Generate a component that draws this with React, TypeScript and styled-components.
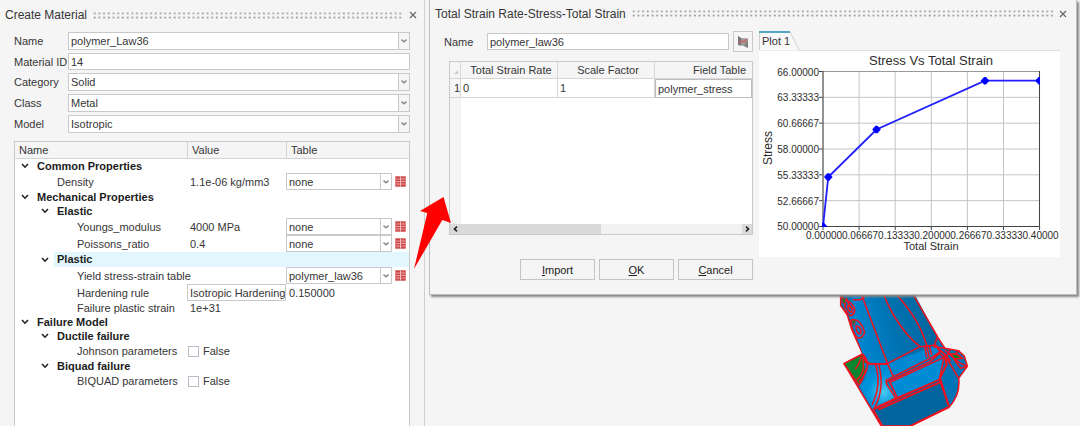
import React from "react";
import styled, { createGlobalStyle, css } from "styled-components";

const GlobalStyle = createGlobalStyle`
  *, *::before, *::after { box-sizing: border-box; }
  body {
    margin: 0;
    background: #f5f5f5;
    color: #363636;
    font: 11px/14px "Liberation Sans", Arial, sans-serif;
  }
  button, input, select { font: inherit; color: inherit; margin: 0; }
`;

const Page = styled.div`
  position: relative;
  display: flex;
  min-height: 100vh;
  overflow: hidden;
`;

const Sidebar = styled.aside`
  display: flex;
  flex-direction: column;
  flex: 0 0 425px;
  padding: 0 14px;
  border-right: 1px solid #cfcfcf;
`;

const TitleBar = styled.header<{ $height: number; $pull: number }>`
  display: flex;
  align-items: center;
  gap: 6px;
  height: ${(p) => p.$height}px;
  margin: 0 -7px 0 -${(p) => p.$pull}px;
`;

const Title = styled.h2`
  margin: 0;
  font-size: 12px;
  font-weight: 400;
  line-height: 16px;
  white-space: nowrap;
`;

const Grip = styled.svg`
  flex: 1;
  min-width: 0;
  width: 100%;
  height: 7px;
`;

const CloseButton = styled.button`
  display: flex;
  padding: 0;
  border: 0;
  background: none;
`;

const Form = styled.form`
  display: flex;
  flex-direction: column;
  gap: 3px;
  padding-top: 2px;
`;

const Field = styled.div`
  display: grid;
  grid-template-columns: 54px 1fr;
  align-items: center;
`;

const Label = styled.label`
  white-space: nowrap;
`;

const boxed = css`
  width: 100%;
  min-width: 0;
  padding: 0 2px;
  border: 1px solid #c9c9c9;
  border-radius: 0;
  background: #fff;
  line-height: 14px;
`;

const TextInput = styled.input`
  ${boxed}
  height: 17px;
`;

const Combo = styled.div<{ $height: number; $shaded?: boolean }>`
  display: grid;
  grid-template-columns: minmax(0, 1fr) 12px;
  height: ${(p) => p.$height}px;

  select {
    ${boxed}
    grid-area: 1 / 1 / 2 / 3;
    height: 100%;
    appearance: none;
  }

  > span {
    grid-area: 1 / 2;
    display: flex;
    align-items: center;
    justify-content: center;
    border: 1px solid #c9c9c9;
    background: ${(p) => (p.$shaded ? "#f5f5f5" : "#fff")};
    pointer-events: none;
  }
`;

const TreeBox = styled.div`
  flex: 1;
  margin-top: 8px;
  border: 1px solid #c9c9c9;
  border-bottom: 0;
  background: #fff;
`;

const Tree = styled.table`
  width: 100%;
  table-layout: fixed;
  border-spacing: 0;

  th {
    height: 17px;
    padding: 0 4px;
    border-bottom: 1px solid #d4d4d4;
    background: #f5f5f5;
    font-weight: 400;
    line-height: 14px;
    text-align: left;
  }
  th + th { border-left: 1px solid #d4d4d4; }
  td { padding: 0; white-space: nowrap; }
`;

const TreeRow = styled.tr<{ $height: number; $selected?: boolean }>`
  height: ${(p) => p.$height}px;
  td + td { background: ${(p) => (p.$selected ? "#e2f6fe" : "transparent")}; }
`;

const NameCell = styled.div<{ $indent: number; $group?: boolean; $selected?: boolean }>`
  display: flex;
  align-items: center;
  padding-left: ${(p) => p.$indent}px;

  > span {
    flex: 1;
    padding-left: 3px;
    background: ${(p) => (p.$selected ? "#e2f6fe" : "transparent")};
    color: ${(p) => (p.$group ? "#1c1c1c" : "inherit")};
    font-weight: ${(p) => (p.$group ? 700 : 400)};
    line-height: ${(p) => (p.$selected ? 15 : 14)}px;
  }
`;

const Expander = styled.button`
  display: flex;
  width: 8px;
  margin-right: 5px;
  padding: 0;
  border: 0;
  background: none;
`;

const Value = styled.span`
  padding-left: 3px;
`;

const ValueInput = styled.input`
  ${boxed}
  display: block;
  height: 17px;
  padding: 0 0 0 2px;
`;

const Check = styled.label`
  display: flex;
  align-items: center;
  gap: 4px;
  padding-left: 1px;

  input {
    appearance: none;
    width: 11px;
    height: 11px;
    border: 1px solid #b9bec9;
    background: #fff;
  }
`;

const TableCell = styled.div`
  display: grid;
  grid-template-columns: minmax(0, 1fr) 11px;
  align-items: center;
  gap: 3px;
  padding-right: 3px;
`;

const IconButton = styled.button`
  display: flex;
  padding: 0;
  border: 0;
  background: none;
`;

const Workspace = styled.main`
  position: relative;
  flex: 1;
  min-width: 0;
  padding: 0 3px 0 4px;
`;

const Model = styled.svg`
  position: absolute;
  left: 405px;
  top: 285px;
  width: 160px;
  height: 141px;
`;

const Dialog = styled.section`
  position: relative;
  padding: 0 16px 14px 14px;
  border: 1px solid #bdbdbd;
  border-top: 0;
  background: #f5f5f5;
  box-shadow: 2px 2px 2px #888;
`;

const DialogBody = styled.div`
  display: grid;
  grid-template-columns: minmax(0, 309fr) minmax(0, 301fr);
  gap: 6px;
  padding-top: 4px;
`;

const Column = styled.div`
  min-width: 0;
`;

const CurveName = styled.div`
  display: grid;
  grid-template-columns: 43px 1fr 20px;
  align-items: center;
  height: 21px;

  input { width: calc(100% - 4px); }
`;

const PickButton = styled.button`
  display: flex;
  align-items: center;
  justify-content: center;
  height: 21px;
  padding: 0;
  border: 1px solid #c9c9c9;
  background: #f5f5f5;
`;

const Sheet = styled.div`
  display: flex;
  flex-direction: column;
  height: 174px;
  margin: 9px 0 0 5px;
  border: 1px solid #c9c9c9;
  background: linear-gradient(90deg, #f5f5f5 11px, #fff 11px);
`;

const SheetTable = styled.table`
  width: 100%;
  table-layout: fixed;
  border-spacing: 0;

  th, td {
    padding: 0;
    border-right: 1px solid #d6d6d6;
    border-bottom: 1px solid #d6d6d6;
    white-space: nowrap;
  }
  th {
    height: 17px;
    background: #f5f5f5;
    font-weight: 400;
    text-align: center;
  }
  thead th + th { padding-left: 4px; }
  tbody th { text-align: right; }
  td {
    height: 19px;
    padding-left: 2px;
    background: #fff;
  }
  tr > :last-child { border-right: 0; }
  thead th:last-child { padding-right: 6px; text-align: right; }
  tbody td:last-child { border: 1px solid #bdbdbd; }
`;

const ScrollBar = styled.div`
  display: grid;
  grid-template-columns: 10px 141fr 141fr 10px;
  height: 10px;
  margin-top: auto;
  background: #f1f1f1;

  button {
    display: flex;
    align-items: center;
    justify-content: center;
    padding: 0;
    border: 0;
    background: #dadada;
  }
  button:last-child { grid-column: 4; }
  span { background: #dadada; }
`;

const Actions = styled.div`
  display: flex;
  justify-content: flex-end;
  gap: 4px;
  margin-top: 24px;
`;

const ActionButton = styled.button`
  width: 75px;
  height: 21px;
  padding: 0;
  border: 1px solid #c4c4c4;
  background: #f5f5f5;
  color: #222;
`;

const TabStrip = styled.div`
  height: 20px;
  border-bottom: 1px solid #dedede;
`;

const Tab = styled.button`
  display: grid;
  padding: 0;
  border: 0;
  background: none;
  text-align: left;

  > * { grid-area: 1 / 1; }
  > span { padding: 3px 0 0 3px; }
`;

const Chart = styled.svg`
  display: block;
  width: 100%;
  background: #fff;
  fill: #2c2c2c;
`;

const Pointer = styled.svg`
  position: absolute;
  left: 414px;
  top: 197px;
  width: 38px;
  height: 74px;
`;

function Dots({ id }: { id: string }) {
  return (
    <Grip aria-hidden="true">
      <pattern id={id} width="4.7" height="4.2" patternUnits="userSpaceOnUse">
        <rect x="0.8" y="0.5" width="1.8" height="1.7" fill="#999" />
      </pattern>
      <rect width="100%" height="7" fill={`url(#${id})`} />
    </Grip>
  );
}

function Close() {
  return (
    <CloseButton aria-label="Close">
      <svg width="8" height="8" viewBox="0 0 8 8" stroke="#666" strokeWidth="1.2">
        <path d="M1 1L7 7M7 1L1 7" />
      </svg>
    </CloseButton>
  );
}

function SelectBox({ id, value, label, height = 17, shaded }: {
  id?: string; value: string; label?: string; height?: number; shaded?: boolean;
}) {
  return (
    <Combo $height={height} $shaded={shaded}>
      <select id={id} aria-label={label} defaultValue={value}>
        <option>{value}</option>
      </select>
      <span>
        <svg width="6" height="4" viewBox="0 0 6 4" fill="none" stroke="#8a8a8a" strokeWidth="1.5">
          <path d="M0.5 0.6L3 2.8L5.5 0.6" />
        </svg>
      </span>
    </Combo>
  );
}

function GridIcon() {
  return (
    <svg width="11" height="11" viewBox="0 0 11 11">
      <rect x="0.3" y="0.3" width="10.4" height="10.4" fill="#cb4343" />
      <path d="M0.5 3H5M6 3H10.5M0.5 5.5H5M6 5.5H10.5M0.5 8H5M6 8H10.5" stroke="#f0b5b5" strokeWidth="0.8" />
      <path d="M5.5 0.5V10.5" stroke="#f8dede" strokeWidth="0.8" />
      <path d="M3 5.5V10.5M8.2 0.5V5.5" stroke="#e69a9a" strokeWidth="0.6" />
    </svg>
  );
}

type Row = {
  name: string; depth: number; height: number;
  group?: boolean; selected?: boolean;
  value?: string; edit?: string; check?: string; table?: string; tableText?: string;
};

const rows: Row[] = [
  { name: "Common Properties", depth: 0, height: 14, group: true },
  { name: "Density", depth: 1, height: 17, value: "1.1e-06 kg/mm3", table: "none" },
  { name: "Mechanical Properties", depth: 0, height: 14, group: true },
  { name: "Elastic", depth: 1, height: 14, group: true },
  { name: "Youngs_modulus", depth: 2, height: 17, value: "4000 MPa", table: "none" },
  { name: "Poissons_ratio", depth: 2, height: 17, value: "0.4", table: "none" },
  { name: "Plastic", depth: 1, height: 15, group: true, selected: true },
  { name: "Yield stress-strain table", depth: 2, height: 17, table: "polymer_law36" },
  { name: "Hardening rule", depth: 2, height: 17, edit: "Isotropic Hardening", tableText: "0.150000" },
  { name: "Failure plastic strain", depth: 2, height: 14, value: "1e+31" },
  { name: "Failure Model", depth: 0, height: 14, group: true },
  { name: "Ductile failure", depth: 1, height: 14, group: true },
  { name: "Johnson parameters", depth: 2, height: 16, check: "False" },
  { name: "Biquad failure", depth: 1, height: 14, group: true },
  { name: "BIQUAD parameters", depth: 2, height: 16, check: "False" },
];

function PropertyRow({ row }: { row: Row }) {
  return (
    <TreeRow $height={row.height} $selected={row.selected}>
      <td>
        <NameCell $indent={(row.group ? 6 : 19) + row.depth * 20} $group={row.group} $selected={row.selected}>
          {row.group && (
            <Expander aria-label={`Collapse ${row.name}`}>
              <svg width="8" height="6" viewBox="0 0 8 6" fill="none" stroke="#222" strokeWidth="1.6">
                <path d="M1 1L4 4.2L7 1" />
              </svg>
            </Expander>
          )}
          <span>{row.name}</span>
        </NameCell>
      </td>
      <td>
        {row.value && <Value>{row.value}</Value>}
        {row.edit && <ValueInput aria-label={row.name} defaultValue={row.edit} />}
        {row.check && <Check><input type="checkbox" />{row.check}</Check>}
      </td>
      <td>
        {row.table && (
          <TableCell>
            <SelectBox value={row.table} label={`${row.name} table`} />
            <IconButton aria-label={`Open ${row.name} table`}><GridIcon /></IconButton>
          </TableCell>
        )}
        {row.tableText && <Value>{row.tableText}</Value>}
      </td>
    </TreeRow>
  );
}

const yTicks = ["66.00000", "63.33333", "60.66667", "58.00000", "55.33333", "52.66667", "50.00000"];
const xTicks = ["0.00000", "0.06667", "0.13333", "0.20000", "0.26667", "0.33333", "0.40000"];
const points = [[64, 175.5], [69.3, 126], [117.5, 78.5], [226, 29.7], [280.5, 29.7]];

function StressChart() {
  return (
    <Chart viewBox="0 0 301 206" role="img" aria-label="Stress Vs Total Strain">
      <text x="172" y="14" fontSize="13" textAnchor="middle">Stress Vs Total Strain</text>
      {yTicks.map((t, i) => {
        const y = 20.5 + i * 25.83;
        return (
          <g key={t}>
            <path d={`M64 ${y}H280.5`} stroke="#c4c4c4" />
            <path d={`M60 ${y}H64`} stroke="#444" />
            <text x="60" y={y + 4} fontSize="10" textAnchor="end">{t}</text>
          </g>
        );
      })}
      {xTicks.map((t, i) => {
        const x = 64 + i * 36.1;
        return (
          <g key={t}>
            <path d={`M${x} 20.5V175.5`} stroke="#c4c4c4" />
            <path d={`M${x} 175.5V179`} stroke="#444" />
            <text x={x + 1} y="188" fontSize="10" textAnchor="middle">{t}</text>
          </g>
        );
      })}
      <path d="M64 20.5H280.5" stroke="#999" fill="none" />
      <path d="M64 20V175.5H280.5V20" stroke="#444" fill="none" />
      <polyline points={points.map((p) => p.join(",")).join(" ")} fill="none" stroke="#2020ff" strokeWidth="1.8" />
      <clipPath id="plotArea"><rect x="63" y="20" width="218" height="156" /></clipPath>
      <g clipPath="url(#plotArea)" fill="#00f">
        {points.map(([x, y]) => (
          <path key={x} d={`M${x - 4.3} ${y}L${x - 1} ${y - 3.8}H${x + 1}L${x + 4.3} ${y}L${x + 1} ${y + 3.8}H${x - 1}Z`} />
        ))}
      </g>
      <text x="172" y="199" fontSize="11" textAnchor="middle">Total Strain</text>
      <text transform="translate(13 97) rotate(-90)" fontSize="12" textAnchor="middle">Stress</text>
    </Chart>
  );
}

function PartModel() {
  return (
    <Model viewBox="0 0 480 423" aria-hidden="true">
      <defs>
        <linearGradient id="body" x1="0" x2="1" y1="0.2" y2="0">
          <stop offset="0" stopColor="#0086d0" />
          <stop offset="0.4" stopColor="#0073b2" />
          <stop offset="1" stopColor="#006399" />
        </linearGradient>
        <radialGradient id="shine" cx="160" cy="320" r="90" gradientUnits="userSpaceOnUse">
          <stop offset="0" stopColor="#4cc8ee" />
          <stop offset="0.5" stopColor="#0096de" />
          <stop offset="1" stopColor="#0082c8" />
        </radialGradient>
      </defs>
      <g stroke="#f5101c" strokeWidth="4.5" strokeLinejoin="round" fill="none">
        <path d="M32 20V62L52 90L64 130L98 207L42 236L158 430H228L356 368Q392 330 386 280L412 244L403 213L385 197L345 190L322 155L250 30V20Z" fill="#0074b4" />
        <path d="M42 236L98 207Q122 240 88 302Z" fill="#0a8630" />
        <path d="M100 235L172 238L190 275L168 290L200 338L130 376L88 302Q120 270 100 235Z" fill="url(#shine)" stroke="none" />
        <path d="M66 20H250L322 155L318 180L172 234H114L98 207L62 100Z" fill="url(#body)" stroke="none" />
        <path d="M172 236L318 182L332 200L190 275Z" fill="#0089d2" stroke="none" />
        <path d="M95 30L172 234L190 275M98 207Q106 236 125 236L172 236L270 185L318 180M163 32C185 90 225 150 270 185M203 32C240 75 270 115 290 180L298 218M285 186L290 218M298 182L305 210M250 30L322 155" />
        <path d="M322 155L312 185L345 190M318 180L330 200L310 215L190 275L168 286L170 298L198 340M172 290L190 282L300 230L328 205L345 220L350 240" />
        <path d="M180 292L342 217L328 284L202 338Z" fill="#008bd5" />
        <path d="M130 374L328 284L358 364L240 423H158Z" fill="#00659d" />
        <path d="M328 284L350 238L345 208L322 190M138 368L202 338M145 374L330 292M330 280L355 360" strokeWidth="6" />
        <path d="M98 207Q132 240 86 292M98 217Q107 265 80 284M76 252Q90 235 94 212M136 238Q156 300 126 360M146 238Q166 310 132 372M112 236L172 238" />
        <path d="M345 195L386 232L412 244M352 222L386 280M370 220L392 250L412 244M345 208L362 228M360 194L350 215M388 197L372 208" />
        <path d="M358 206L382 208L398 220L376 222Z" fill="#167d28" />
        <path d="M35 30L47 62M49 38L58 64L70 72M42 48Q62 44 74 72Q75 88 62 92Q48 84 44 60M54 60Q68 64 66 82Q52 80 54 60M64 104Q92 100 104 142Q98 162 82 158Q64 140 62 104M78 122Q96 126 92 146Q78 148 78 122M68 44H92L104 34" />
        <path d="M36 36L46 42L47 56L37 54ZM64 108L78 104L72 122Z" fill="#16782c" strokeWidth="2" />
      </g>
    </Model>
  );
}

export default function App() {
  return (
    <Page>
      <GlobalStyle />
      <Sidebar>
        <TitleBar $height={30} $pull={9}>
          <Title>Create Material</Title>
          <Dots id="gripLeft" />
          <Close />
        </TitleBar>
        <Form>
          <Field>
            <Label htmlFor="name">Name</Label>
            <SelectBox id="name" value="polymer_Law36" height={18} shaded />
          </Field>
          <Field>
            <Label htmlFor="materialId">Material ID</Label>
            <TextInput id="materialId" defaultValue="14" />
          </Field>
          <Field>
            <Label htmlFor="category">Category</Label>
            <SelectBox id="category" value="Solid" height={18} shaded />
          </Field>
          <Field>
            <Label htmlFor="class">Class</Label>
            <SelectBox id="class" value="Metal" height={18} shaded />
          </Field>
          <Field>
            <Label htmlFor="model">Model</Label>
            <SelectBox id="model" value="Isotropic" height={18} shaded />
          </Field>
        </Form>
        <TreeBox>
          <Tree>
            <colgroup>
              <col width="172" />
              <col width="99" />
              <col />
            </colgroup>
            <thead>
              <tr><th>Name</th><th>Value</th><th>Table</th></tr>
            </thead>
            <tbody>
              {rows.map((row) => <PropertyRow key={row.name} row={row} />)}
            </tbody>
          </Tree>
        </TreeBox>
      </Sidebar>

      <Workspace>
        <PartModel />
        <Dialog>
          <TitleBar $height={27} $pull={9}>
            <Title>Total Strain Rate-Stress-Total Strain</Title>
            <Dots id="gripRight" />
            <Close />
          </TitleBar>
          <DialogBody>
            <Column>
              <CurveName>
                <Label htmlFor="curveName">Name</Label>
                <TextInput id="curveName" defaultValue="polymer_law36" />
                <PickButton aria-label="Pick curve">
                  <svg width="12" height="14" viewBox="0 0 12 14">
                    <path d="M1 1L4 3L11 3.5V13L7 11L1 10Z" fill="#9c9c9c" />
                    <path d="M1 1L4 3V10.5L1 10Z" fill="#777" />
                    <path d="M7 11L11 5V13Z" fill="#808080" />
                    <path d="M2 8L5 6L7 7L10 4" stroke="#d06060" strokeWidth="1.2" fill="none" />
                  </svg>
                </PickButton>
              </CurveName>
              <Sheet>
                <SheetTable>
                  <colgroup>
                    <col width="11" />
                    <col />
                    <col />
                    <col />
                  </colgroup>
                  <thead>
                    <tr>
                      <th aria-label="Row">
                        <svg width="5" height="4" viewBox="0 0 5 4"><path d="M5 0V4H1Z" fill="#ccc" /></svg>
                      </th>
                      <th>Total Strain Rate</th>
                      <th>Scale Factor</th>
                      <th>Field Table</th>
                    </tr>
                  </thead>
                  <tbody>
                    <tr><th>1</th><td>0</td><td>1</td><td>polymer_stress</td></tr>
                  </tbody>
                </SheetTable>
                <ScrollBar>
                  <button aria-label="Scroll left">
                    <svg width="5" height="6" viewBox="0 0 5 6" fill="none" stroke="#222" strokeWidth="1.6"><path d="M4 0.7L1.5 3L4 5.3" /></svg>
                  </button>
                  <span />
                  <button aria-label="Scroll right">
                    <svg width="5" height="6" viewBox="0 0 5 6" fill="none" stroke="#222" strokeWidth="1.6"><path d="M1 0.7L3.5 3L1 5.3" /></svg>
                  </button>
                </ScrollBar>
              </Sheet>
              <Actions>
                <ActionButton><u>I</u>mport</ActionButton>
                <ActionButton><u>O</u>K</ActionButton>
                <ActionButton><u>C</u>ancel</ActionButton>
              </Actions>
            </Column>
            <Column>
              <TabStrip>
                <Tab>
                  <svg width="42" height="20" viewBox="0 0 42 20">
                    <path d="M0 0H31L41 19.5H0Z" fill="#f8f8f8" />
                    <path d="M0.5 19V1M31 1L40.5 19.5" stroke="#cfcfcf" />
                    <path d="M0 1H31" stroke="#2a93b8" strokeWidth="1.6" />
                  </svg>
                  <span>Plot 1</span>
                </Tab>
              </TabStrip>
              <StressChart />
            </Column>
          </DialogBody>
        </Dialog>
      </Workspace>

      <Pointer viewBox="0 0 38 74" aria-hidden="true">
        <path d="M0 72L13.3 16L6 14L29.5 0L37 26L28.3 23Z" fill="#f00" />
      </Pointer>
    </Page>
  );
}
